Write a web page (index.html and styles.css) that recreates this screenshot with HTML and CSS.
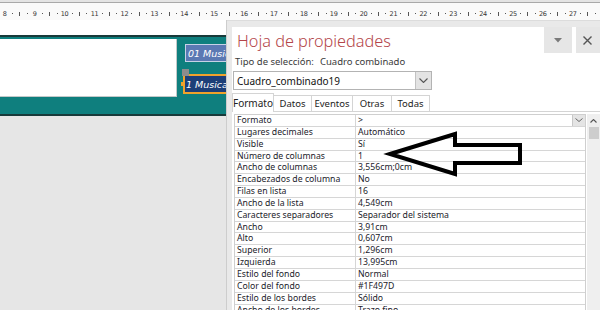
FILE: index.html
```html
<!DOCTYPE html>
<html lang="es">
<head>
<meta charset="utf-8">
<title>Hoja de propiedades</title>
<link rel="stylesheet" href="styles.css">
</head>
<body>
<div class="ruler">
  <div class="unit"><span class="num">8</span><span class="dot"></span><span class="tick"></span><span class="dot"></span></div>
  <div class="unit"><span class="num">9</span><span class="dot"></span><span class="tick"></span><span class="dot"></span></div>
  <div class="unit"><span class="num">10</span><span class="dot"></span><span class="tick"></span><span class="dot"></span></div>
  <div class="unit"><span class="num">11</span><span class="dot"></span><span class="tick"></span><span class="dot"></span></div>
  <div class="unit"><span class="num">12</span><span class="dot"></span><span class="tick"></span><span class="dot"></span></div>
  <div class="unit"><span class="num">13</span><span class="dot"></span><span class="tick"></span><span class="dot"></span></div>
  <div class="unit"><span class="num">14</span><span class="dot"></span><span class="tick"></span><span class="dot"></span></div>
  <div class="unit"><span class="num">15</span><span class="dot"></span><span class="tick"></span><span class="dot"></span></div>
  <div class="unit"><span class="num">16</span><span class="dot"></span><span class="tick"></span><span class="dot"></span></div>
  <div class="unit"><span class="num">17</span><span class="dot"></span><span class="tick"></span><span class="dot"></span></div>
  <div class="unit"><span class="num">18</span><span class="dot"></span><span class="tick"></span><span class="dot"></span></div>
  <div class="unit"><span class="num">19</span><span class="dot"></span><span class="tick"></span><span class="dot"></span></div>
  <div class="unit"><span class="num">20</span><span class="dot"></span><span class="tick"></span><span class="dot"></span></div>
  <div class="unit"><span class="num">21</span><span class="dot"></span><span class="tick"></span><span class="dot"></span></div>
  <div class="unit"><span class="num">22</span><span class="dot"></span><span class="tick"></span><span class="dot"></span></div>
  <div class="unit"><span class="num">23</span><span class="dot"></span><span class="tick"></span><span class="dot"></span></div>
  <div class="unit"><span class="num">24</span><span class="dot"></span><span class="tick"></span><span class="dot"></span></div>
  <div class="unit"><span class="num">25</span><span class="dot"></span><span class="tick"></span><span class="dot"></span></div>
  <div class="unit"><span class="num">26</span><span class="dot"></span><span class="tick"></span><span class="dot"></span></div>
  <div class="unit"><span class="num">27</span><span class="dot"></span><span class="tick"></span><span class="dot"></span></div>
</div>
<div class="main">
  <div class="design">
    <div class="strip"></div>
    <div class="section">
      <div class="subform"></div>
      <div class="controls">
        <div class="ctl ctl1">01 Musica</div>
        <div class="ctl ctl2">1 Musica<span class="handle"></span><span class="grip"></span></div>
      </div>
    </div>
  </div>
  <div class="panel">
    <div class="panel-inner">
      <div class="head">
        <div class="title">Hoja de propiedades</div>
        <div class="hbtn">
          <svg width="8" height="5" viewBox="0 0 8 5"><path d="M0 0H8L4 4.5Z" fill="#7a7a7a"/></svg>
        </div>
        <div class="hbtn close">
          <svg width="9" height="9" viewBox="0 0 9 9"><path d="M0.5 0.5L8.5 8.5M8.5 0.5L0.5 8.5" stroke="#555" stroke-width="1.4"/></svg>
        </div>
      </div>
      <div class="seltype"><span>Tipo de selección:</span><span>Cuadro combinado</span></div>
      <div class="combo">
        <span class="combo-text">Cuadro_combinado19</span>
        <span class="combo-btn"><svg width="9" height="5" viewBox="0 0 9 5"><path d="M0.5 0.5L4.5 4.5L8.5 0.5" fill="none" stroke="#555" stroke-width="1.1"/></svg></span>
      </div>
      <div class="tabs">
        <div class="tab active">Formato</div>
        <div class="tab">Datos</div>
        <div class="tab">Eventos</div>
        <div class="tab">Otras</div>
        <div class="tab">Todas</div>
      </div>
      <div class="grid-wrap">
        <div class="props">
          <div class="row"><span class="k">Formato</span><span class="v">&gt;<span class="vbtn"><svg width="8" height="4" viewBox="0 0 8 4"><path d="M0.5 0.5L4 3.5L7.5 0.5" fill="none" stroke="#666" stroke-width="1"/></svg></span></span></div>
          <div class="row"><span class="k">Lugares decimales</span><span class="v">Automático</span></div>
          <div class="row"><span class="k">Visible</span><span class="v">Sí</span></div>
          <div class="row"><span class="k">Número de columnas</span><span class="v">1</span></div>
          <div class="row"><span class="k">Ancho de columnas</span><span class="v">3,556cm;0cm</span></div>
          <div class="row"><span class="k">Encabezados de columna</span><span class="v">No</span></div>
          <div class="row"><span class="k">Filas en lista</span><span class="v">16</span></div>
          <div class="row"><span class="k">Ancho de la lista</span><span class="v">4,549cm</span></div>
          <div class="row"><span class="k">Caracteres separadores</span><span class="v">Separador del sistema</span></div>
          <div class="row"><span class="k">Ancho</span><span class="v">3,91cm</span></div>
          <div class="row"><span class="k">Alto</span><span class="v">0,607cm</span></div>
          <div class="row"><span class="k">Superior</span><span class="v">1,296cm</span></div>
          <div class="row"><span class="k">Izquierda</span><span class="v">13,995cm</span></div>
          <div class="row"><span class="k">Estilo del fondo</span><span class="v">Normal</span></div>
          <div class="row"><span class="k">Color del fondo</span><span class="v">#1F497D</span></div>
          <div class="row"><span class="k">Estilo de los bordes</span><span class="v">Sólido</span></div>
          <div class="row"><span class="k">Ancho de los bordes</span><span class="v">Trazo fino</span></div>
        </div>
        <div class="scrollbar">
          <svg class="sb-up" width="7" height="4" viewBox="0 0 7 4"><path d="M0.5 3.5L3.5 0.5L6.5 3.5" fill="none" stroke="#555" stroke-width="1.1"/></svg>
          <div class="thumb"></div>
        </div>
      </div>
    </div>
  </div>
</div>
<svg class="arrow" width="600" height="310" viewBox="0 0 600 310">
  <path d="M390 154L455 134V145H520V163H455V174Z" fill="none" stroke="#000" stroke-width="4" stroke-linejoin="miter"/>
</svg>
</body>
</html>
```

FILE: styles.css
```css
* { box-sizing: border-box; }
html, body { margin: 0; padding: 0; }
body {
  width: 600px;
  height: 310px;
  overflow: hidden;
  background: #e6e6e6;
  font-family: "Noto Sans", "Open Sans", sans-serif;
  color: #1e1e1e;
  position: relative;
}

/* Ruler */
.ruler {
  height: 20px;
  background: #fafafa;
  border-top: 2px solid #e4e4e4;
  box-shadow: inset 0 1px 0 #a9a9a9;
  display: flex;
  padding-left: 1px;
  align-items: center;
  padding-top: 5px;
  overflow: hidden;
}
.unit {
  flex: 0 0 29.9px;
  display: flex;
  align-items: center;
}
.unit > span {
  flex: 1 1 0;
  display: flex;
  justify-content: center;
  align-items: center;
}
.num {
  font-family: "DejaVu Sans", sans-serif;
  font-size: 6.5px;
  color: #333;
  letter-spacing: -0.3px;
  height: 8px;
}
.dot::before {
  content: "";
  width: 1px;
  height: 1px;
  background: #555;
}
.tick::before {
  content: "";
  width: 1px;
  height: 4px;
  background: #555;
}

/* Main area */
.main {
  display: flex;
  height: 290px;
}
.design {
  flex: 0 0 226px;
  min-width: 0;
  overflow: hidden;
  display: flex;
  flex-direction: column;
}
.strip {
  height: 15px;
  background: #fff;
}
.section {
  height: 81px;
  background: #0f7f7e;
  border-top: 2px solid #183a3a;
  border-bottom: 2px solid #183a3a;
  display: flex;
  padding-top: 2px;
}
.subform {
  flex: 0 0 177px;
  height: 58px;
  background: #fff;
  border-right: 1px solid #c3c9c9;
  border-bottom: 1px solid #c3c9c9;
}
.controls {
  flex: 1;
  min-width: 0;
  display: flex;
  flex-direction: column;
  padding-left: 6px;
  padding-top: 5px;
  gap: 12px;
}
.ctl {
  height: 18px;
  font-family: "DejaVu Sans", sans-serif;
  font-style: italic;
  font-size: 9.5px;
  color: #fff;
  white-space: nowrap;
  display: flex;
  align-items: center;
  position: relative;
}
.ctl1 {
  margin-left: 2px;
  background: #5b79b3;
  border: 1px solid #c7d2e6;
  border-right: none;
  padding-left: 2px;
}
.ctl2 {
  height: 20px;
  background: #1d3f78;
  border: 2px solid #f0a22b;
  border-right: none;
  padding-left: 1px;
}
.handle {
  position: absolute;
  left: -3px;
  top: -7px;
  width: 7px;
  height: 7px;
  background: #8c8c8c;
}
.grip {
  position: absolute;
  left: -4px;
  top: 6px;
  width: 3px;
  height: 4px;
  background: #f0a22b;
}

/* Property panel */
.panel {
  flex: 0 0 374px;
  min-width: 0;
  background: #e9e9e9;
  border-left: 1px solid #cdcdcd;
  padding: 7px 0 0 5px;
  box-shadow: inset 0 1px 0 #dcdcdc;
  overflow: hidden;
}
.panel-inner {
  background: #fff;
  height: 100%;
  width: 372px;
}
.head {
  height: 26px;
  display: flex;
  align-items: flex-start;
}
.title {
  font-family: "Noto Sans", sans-serif;
  font-weight: 300;
  font-size: 16.3px;
  color: #b4464a;
  padding-left: 5px;
  line-height: 26px;
  margin-top: 1px;
}
.hbtn {
  width: 28px;
  flex: 0 0 28px;
  height: 26px;
  background: #e6e6e6;
  margin-left: auto;
  display: flex;
  align-items: center;
  justify-content: center;
}
.hbtn.close {
  margin-left: 4px;
  justify-content: flex-start;
  padding-left: 7px;
}
.seltype {
  font-size: 9.5px;
  color: #3a3a3a;
  padding-left: 3px;
  height: 17px;
  line-height: 15px;
  display: flex;
  gap: 6px;
  margin-top: 1px;
}
.combo {
  margin-left: 1px;
  width: 199px;
  height: 19px;
  border: 1px solid #b3b3b3;
  display: flex;
  align-items: center;
  font-size: 10px;
  color: #111;
}
.combo-text {
  flex: 1;
  padding-left: 3px;
}
.combo-btn {
  width: 16px;
  height: 17px;
  background: #e3e3e3;
  border-left: 1px solid #c2c2c2;
  display: flex;
  align-items: center;
  justify-content: center;
}
.tabs {
  display: flex;
  margin-top: 4px;
  height: 18px;
  align-items: flex-end;
  border-bottom: 1px solid #d4d4d4;
}
.tab {
  height: 16px;
  font-size: 9.5px;
  color: #222;
  border: 1px solid #d4d4d4;
  border-bottom: none;
  border-left: none;
  display: flex;
  align-items: center;
  justify-content: center;
  background: #fff;
}
.tab.active {
  height: 19px;
  width: 42px;
  border-left: 1px solid #d4d4d4;
  margin-bottom: -1px;
  font-size: 10px;
}
.tab:nth-child(2) { width: 38px; }
.tab:nth-child(3) { width: 41px; }
.tab:nth-child(4) { width: 39px; }
.tab:nth-child(5) { width: 38px; }

.grid-wrap {
  display: flex;
  margin-top: 2px;
  height: 200px;
}
.props {
  margin-left: 2px;
  width: 352px;
  border-top: 1px solid #cfcfcf;
  border-left: 1px solid #cfcfcf;
  border-right: 1px solid #cfcfcf;
}
.row {
  height: 11.85px;
  display: grid;
  grid-template-columns: 121px 1fr;
  border-bottom: 1px solid #d6d6d6;
  font-size: 8.7px;
  line-height: 10.85px;
  color: #1b1b2a;
}
.k {
  padding-left: 2px;
  border-right: 1px solid #d6d6d6;
  white-space: nowrap;
}
.v {
  padding-left: 2px;
  white-space: nowrap;
  display: flex;
}
.vbtn {
  margin-left: auto;
  width: 13px;
  height: 10.85px;
  background: #e4e4e4;
  border-left: 1px solid #c8c8c8;
  display: flex;
  align-items: center;
  justify-content: center;
}
.scrollbar {
  margin-left: 1px;
  width: 15px;
  background: #efefef;
  display: flex;
  flex-direction: column;
  align-items: flex-start;
  padding-left: 2px;
}
.sb-up {
  margin-top: 5px;
  margin-left: 1px;
}
.thumb {
  margin-top: 4px;
  width: 10px;
  height: 12px;
  background: #cdcdcd;
}

/* Annotation overlay */
.arrow {
  position: absolute;
  left: 0;
  top: 0;
  pointer-events: none;
}
```
